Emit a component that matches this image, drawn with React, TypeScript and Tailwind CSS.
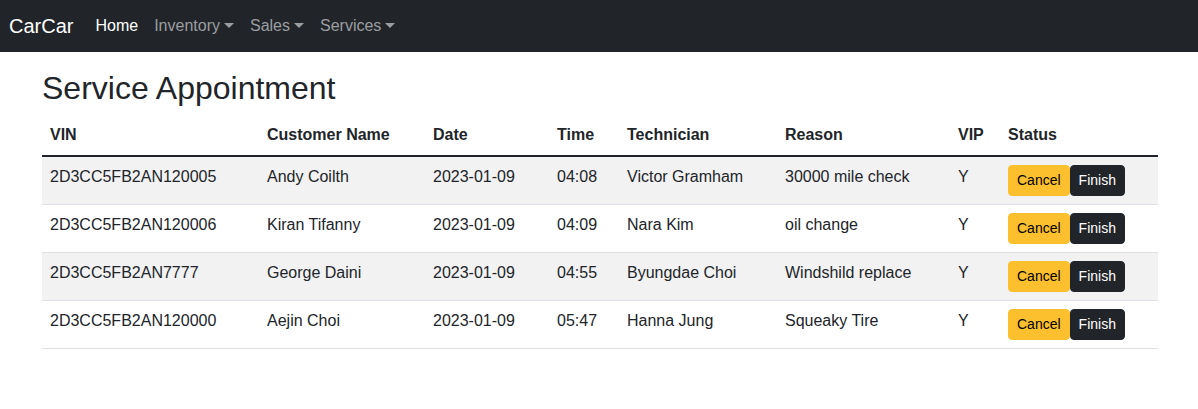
import React from "react";

const rows = [
  ["2D3CC5FB2AN120005", "Andy Coilth", "2023-01-09", "04:08", "Victor Gramham", "30000 mile check", "Y"],
  ["2D3CC5FB2AN120006", "Kiran Tifanny", "2023-01-09", "04:09", "Nara Kim", "oil change", "Y"],
  ["2D3CC5FB2AN7777", "George Daini", "2023-01-09", "04:55", "Byungdae Choi", "Windshild replace", "Y"],
  ["2D3CC5FB2AN120000", "Aejin Choi", "2023-01-09", "05:47", "Hanna Jung", "Squeaky Tire", "Y"],
];

const widths = ["w-[217px]", "w-[166px]", "w-[124px]", "w-[70px]", "w-[158px]", "w-[173px]", "w-[50px]", "w-[158px]"];
const headers = ["VIN", "Customer Name", "Date", "Time", "Technician", "Reason", "VIP", "Status"];

function Caret() {
  return <span className="ml-[4px] inline-block h-0 w-0 border-x-[5px] border-t-[5px] border-x-transparent border-t-current align-[3px]" />;
}

export default function App() {
  return (
    <div className="min-h-[409px] bg-white text-[#212529]" style={{ fontFamily: '"Liberation Sans", Arial, sans-serif' }}>
      <nav className="flex h-[52px] items-center bg-[#212529] pl-[9px]">
        <span className="mr-[14px] text-[20px] leading-[30px] text-white">CarCar</span>
        <div className="flex text-[16px] leading-[24px]">
          <span className="px-[8px] text-white">Home</span>
          <span className="px-[8px] text-[#9b9da0]">Inventory<Caret /></span>
          <span className="px-[8px] text-[#9b9da0]">Sales<Caret /></span>
          <span className="px-[8px] text-[#9b9da0]">Services<Caret /></span>
        </div>
      </nav>
      <div className="ml-[42px] w-[1116px] pt-[17px]">
        <h1 className="mb-[8px] text-[32px] font-medium leading-[38px]">Service Appointment</h1>
        <table className="w-full border-collapse text-[16px] leading-[24px]">
          <thead>
            <tr className="border-b-2 border-[#212529]">
              {headers.map((h, i) => (
                <th key={h} className={`${widths[i]} p-[8px] text-left align-top font-bold`}>{h}</th>
              ))}
            </tr>
          </thead>
          <tbody>
            {rows.map((r, ri) => (
              <tr key={ri} className={`border-b border-[#dee2e6] ${ri % 2 === 0 ? "bg-[#f2f2f2]" : "bg-white"}`}>
                {r.map((c, ci) => (
                  <td key={ci} className="p-[8px] align-top">{c}</td>
                ))}
                <td className="p-[8px] align-top">
                  <div className="flex">
                    <button className="h-[31px] rounded-[4px] border border-[#fcbf2e] bg-[#fcbf2e] px-[8px] text-[14px] leading-[21px] text-black">Cancel</button>
                    <button className="h-[31px] rounded-[4px] border border-[#212529] bg-[#212529] px-[8px] text-[14px] leading-[21px] text-white">Finish</button>
                  </div>
                </td>
              </tr>
            ))}
          </tbody>
        </table>
      </div>
    </div>
  );
}
